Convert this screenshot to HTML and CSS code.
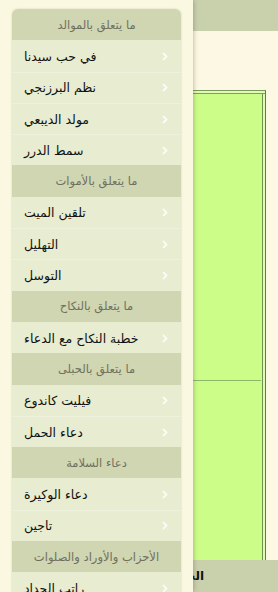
FILE: index.html
```html
<!DOCTYPE html>
<html>
<head>
<meta charset="utf-8">
<link rel="stylesheet" href="styles.css">
</head>
<body>
<div class="screen">
  <aside class="panel">
    <ul class="list">
      <li class="divider">ما يتعلق بالموالد</li>
      <li class="item"><span class="label">في حب سيدنا</span><svg class="chev" width="6" height="9" viewBox="0 0 6 9"><polyline points="1,1 4.5,4.5 1,8" fill="none" stroke="#fff" stroke-width="1.8"/></svg></li>
      <li class="item"><span class="label">نظم البرزنجي</span><svg class="chev" width="6" height="9" viewBox="0 0 6 9"><polyline points="1,1 4.5,4.5 1,8" fill="none" stroke="#fff" stroke-width="1.8"/></svg></li>
      <li class="item"><span class="label">مولد الديبعي</span><svg class="chev" width="6" height="9" viewBox="0 0 6 9"><polyline points="1,1 4.5,4.5 1,8" fill="none" stroke="#fff" stroke-width="1.8"/></svg></li>
      <li class="item"><span class="label">سمط الدرر</span><svg class="chev" width="6" height="9" viewBox="0 0 6 9"><polyline points="1,1 4.5,4.5 1,8" fill="none" stroke="#fff" stroke-width="1.8"/></svg></li>
      <li class="divider">ما يتعلق بالأموات</li>
      <li class="item"><span class="label">تلقين الميت</span><svg class="chev" width="6" height="9" viewBox="0 0 6 9"><polyline points="1,1 4.5,4.5 1,8" fill="none" stroke="#fff" stroke-width="1.8"/></svg></li>
      <li class="item"><span class="label">التهليل</span><svg class="chev" width="6" height="9" viewBox="0 0 6 9"><polyline points="1,1 4.5,4.5 1,8" fill="none" stroke="#fff" stroke-width="1.8"/></svg></li>
      <li class="item"><span class="label">التوسل</span><svg class="chev" width="6" height="9" viewBox="0 0 6 9"><polyline points="1,1 4.5,4.5 1,8" fill="none" stroke="#fff" stroke-width="1.8"/></svg></li>
      <li class="divider">ما يتعلق بالنكاح</li>
      <li class="item"><span class="label">خطبة النكاح مع الدعاء</span><svg class="chev" width="6" height="9" viewBox="0 0 6 9"><polyline points="1,1 4.5,4.5 1,8" fill="none" stroke="#fff" stroke-width="1.8"/></svg></li>
      <li class="divider">ما يتعلق بالحبلى</li>
      <li class="item"><span class="label">فيليت كاندوع</span><svg class="chev" width="6" height="9" viewBox="0 0 6 9"><polyline points="1,1 4.5,4.5 1,8" fill="none" stroke="#fff" stroke-width="1.8"/></svg></li>
      <li class="item"><span class="label">دعاء الحمل</span><svg class="chev" width="6" height="9" viewBox="0 0 6 9"><polyline points="1,1 4.5,4.5 1,8" fill="none" stroke="#fff" stroke-width="1.8"/></svg></li>
      <li class="divider">دعاء السلامة</li>
      <li class="item"><span class="label">دعاء الوكيرة</span><svg class="chev" width="6" height="9" viewBox="0 0 6 9"><polyline points="1,1 4.5,4.5 1,8" fill="none" stroke="#fff" stroke-width="1.8"/></svg></li>
      <li class="item"><span class="label">تاجين</span><svg class="chev" width="6" height="9" viewBox="0 0 6 9"><polyline points="1,1 4.5,4.5 1,8" fill="none" stroke="#fff" stroke-width="1.8"/></svg></li>
      <li class="divider">الأحزاب والأوراد والصلوات</li>
      <li class="item"><span class="label">راتب الحداد</span><svg class="chev" width="6" height="9" viewBox="0 0 6 9"><polyline points="1,1 4.5,4.5 1,8" fill="none" stroke="#fff" stroke-width="1.8"/></svg></li>
    </ul>
  </aside>
  <main class="page">
    <header class="topbar"></header>
    <section class="content">
      <div class="box">
        <div class="box-top"></div>
        <div class="box-bottom"></div>
      </div>
    </section>
    <footer class="footbar"><span class="foot-title">الحمد</span></footer>
  </main>
</div>
</body>
</html>
```
FILE: styles.css
```css
html, body {
  margin: 0;
  padding: 0;
  background: #fcf8e3;
}
.screen {
  display: flex;
  width: 278px;
  height: 592px;
  overflow: hidden;
  font-family: "DejaVu Sans", sans-serif;
}
.panel {
  position: relative;
  z-index: 2;
  flex: 0 0 193px;
  background: #fbf8e2;
  box-shadow: 1px 0 4px rgba(90, 90, 60, 0.35);
  padding: 9px 12px 0 12px;
  box-sizing: border-box;
  overflow: hidden;
}
.list {
  list-style: none;
  margin: 0;
  padding: 0;
  border-radius: 6px 6px 0 0;
  overflow: hidden;
  box-shadow: 0 0 2px rgba(120, 120, 90, 0.35);
}
.divider {
  height: 31.3px;
  display: flex;
  align-items: center;
  justify-content: center;
  background: #d0d6b1;
  color: #6f7060;
  font-size: 11.5px;
  box-sizing: border-box;
}
.item {
  height: 31.3px;
  display: flex;
  align-items: center;
  justify-content: space-between;
  padding: 0 12px 0 12px;
  background: #e8ecd0;
  border-top: 1px solid #eef1dc;
  box-sizing: border-box;
  color: #111;
  font-size: 12.5px;
}
.divider + .item {
  border-top-color: #e8ecd0;
}
.label {
  white-space: nowrap;
}
.chev {
  opacity: 0.85;
  margin-right: 1px;
}
.page {
  flex: 1 1 auto;
  display: flex;
  flex-direction: column;
  overflow: hidden;
  background: #fdf8e4;
}
.topbar {
  flex: 0 0 31px;
  background: #c9d0ac;
}
.content {
  flex: 1 1 auto;
  padding: 59px 12px 0 0;
  display: flex;
  flex-direction: column;
}
.box {
  flex: 1 1 auto;
  display: flex;
  flex-direction: column;
  background: #ccfd88;
  border-top: 1px solid #7a9a5a;
  border-right: 1px solid #5e7e45;
  box-shadow: inset 0 2px 0 #e0f8b8, inset 0 3px 0 #7da05c, inset -2px 0 0 #e0f8b8, inset -3px 0 0 #6f9250;
}
.box-top {
  flex: 0 0 289px;
  border-bottom: 1px solid #8db86a;
  margin-right: 4px;
}
.box-bottom {
  flex: 1 1 auto;
}
.footbar {
  flex: 0 0 32px;
  background: #c9d0ac;
  display: flex;
  align-items: center;
}
.foot-title {
  width: 11px;
  direction: rtl;
  white-space: nowrap;
  font-weight: bold;
  font-size: 12px;
  color: #111;
}
```
